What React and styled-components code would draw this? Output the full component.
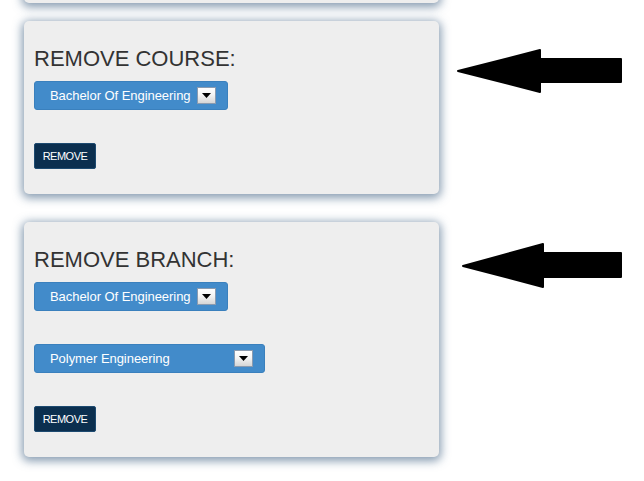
import React from 'react'
import styled, { createGlobalStyle } from 'styled-components'

const GlobalStyle = createGlobalStyle`
  body {
    margin: 0;
    background: #ffffff;
    font-family: "Liberation Sans", Arial, sans-serif;
  }
`

// the admin panel: a column of cards, each with an arrow pointing at it
const panels = [
    {
        title: 'REMOVE COURSE:',
        selects: [{ label: 'Bachelor Of Engineering' }],
        arrow: { left: 17, top: 27, back: 84, end: 165, bottom: 44, shaftBottom: 34 },
    },
    {
        title: 'REMOVE BRANCH:',
        selects: [
            { label: 'Bachelor Of Engineering' },
            { label: 'Polymer Engineering', width: 231 },
        ],
        arrow: { left: 22, top: 20, back: 82, end: 160, bottom: 45, shaftBottom: 35 },
    },
]

function Arrow({ back, end, bottom, shaftBottom }) {
    const mid = Math.round(bottom / 2) + 1
    const d = `M2 ${mid} L${back} 2 L${back} 11 L${end} 11 L${end} ${shaftBottom} L${back} ${shaftBottom} L${back} ${bottom} Z`
    return (
        <svg width={end + 2} height={bottom + 2} viewBox={`0 0 ${end + 2} ${bottom + 2}`}>
            <path d={d} fill="#000" stroke="#000" strokeWidth="2" strokeLinejoin="round" />
        </svg>
    )
}

function Dropdown({ label, width }) {
    return (
        <Select $width={width}>
            <span>{label}</span>
            <Caret>
                <svg width="9" height="5" viewBox="0 0 9 5">
                    <path d="M0 0 L9 0 L4.5 5 Z" fill="#000" />
                </svg>
            </Caret>
        </Select>
    )
}

function App() {
    return (
        <Page>
            <GlobalStyle />
            <TopCard />

            {panels.map((panel) => (
                <Row key={panel.title}>
                    <Card>
                        <Title>{panel.title}</Title>
                        {panel.selects.map((s) => (
                            <Dropdown key={s.label} label={s.label} width={s.width} />
                        ))}
                        <RemoveButton>REMOVE</RemoveButton>
                    </Card>
                    <ArrowSlot $left={panel.arrow.left} $top={panel.arrow.top}>
                        <Arrow {...panel.arrow} />
                    </ArrowSlot>
                </Row>
            ))}
        </Page>
    )
}

const Page = styled.main`
    display: flex;
    flex-direction: column;
    gap: 28px;
    padding: 0 0 24px 24px;
    min-height: 481px;
    box-sizing: border-box;
`

const Row = styled.section`
    display: flex;
    align-items: flex-start;
`

const Card = styled.div`
    width: 415px;
    box-sizing: border-box;
    padding: 26px 10px 25px;
    background: #eeeeee;
    border-radius: 5px;
    box-shadow: 0 2px 10px 2px rgba(55, 90, 125, 0.6);
    display: flex;
    flex-direction: column;
    align-items: flex-start;
    gap: 33px;
`

const TopCard = styled(Card)`
    height: 43px;
    margin-top: -40px;
    margin-bottom: -10px;
    padding: 0;
`

const Title = styled.h2`
    margin: 0 0 -23px;
    font-size: 22px;
    line-height: 24px;
    font-weight: normal;
    color: #333333;
`

const Select = styled.div`
    display: flex;
    align-items: center;
    justify-content: space-between;
    gap: 6px;
    width: ${(p) => (p.$width ? `${p.$width}px` : 'auto')};
    height: 29px;
    box-sizing: border-box;
    padding: 0 11px 0 15px;
    background: #428bca;
    border: 1px solid #3a80bd;
    border-radius: 3px;
    color: #ffffff;
    font-size: 13px;
    letter-spacing: -0.05px;
`

const Caret = styled.span`
    display: flex;
    align-items: center;
    justify-content: center;
    width: 19px;
    height: 17px;
    box-sizing: border-box;
    background: linear-gradient(#ffffff 0%, #f4f4f4 45%, #d6d6d6 100%);
    border: 1px solid #8a9bb0;
`

const RemoveButton = styled.button`
    width: 62px;
    height: 26px;
    padding: 0;
    background: #0b2f4f;
    border: 1px solid #1d4a70;
    border-radius: 2px;
    color: #ffffff;
    font-family: "Liberation Sans", Arial, sans-serif;
    font-size: 11px;
    letter-spacing: -0.5px;
`

const ArrowSlot = styled.div`
    margin-left: ${(p) => p.$left}px;
    margin-top: ${(p) => p.$top}px;
    line-height: 0;
`

export default App
